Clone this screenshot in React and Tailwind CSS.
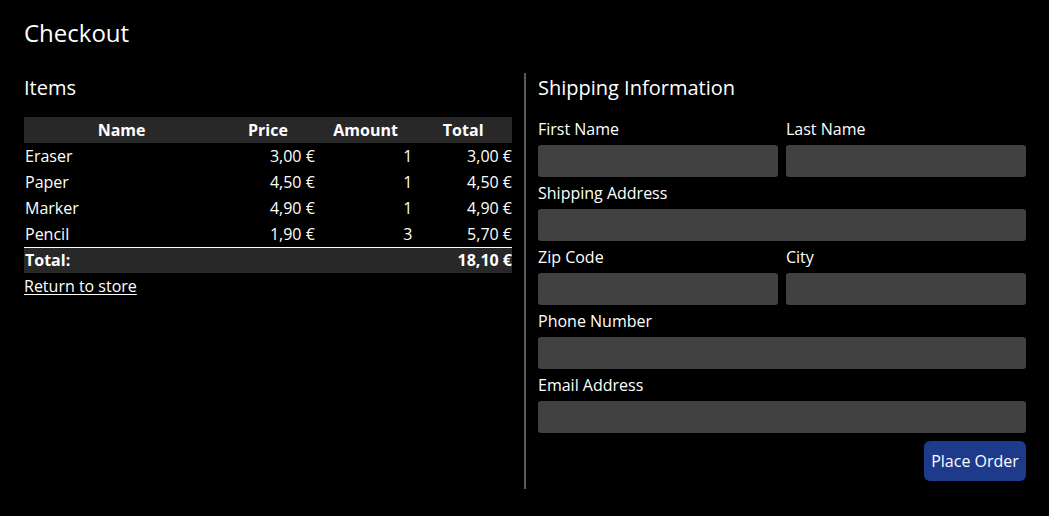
import React from "react";

const items = [
  ["Eraser", "3,00 €", "1", "3,00 €"],
  ["Paper", "4,50 €", "1", "4,50 €"],
  ["Marker", "4,90 €", "1", "4,90 €"],
  ["Pencil", "1,90 €", "3", "5,70 €"],
];

function Field({ label }) {
  return (
    <div className="flex flex-col gap-1">
      <label className="h-6 leading-6 text-base">{label}</label>
      <div className="h-8 rounded-[3px] bg-[#414141]" />
    </div>
  );
}

export default function App() {
  return (
    <div
      className="min-h-[516px] bg-black text-white pl-6 pr-[23px] pt-4"
      style={{ fontFamily: '"Open Sans", "Noto Sans", sans-serif' }}
    >
      <h1 className="text-2xl leading-[34px] mb-[23px]">Checkout</h1>
      <div className="flex">
        <div className="w-[488px] shrink-0">
          <h2 className="text-xl leading-[28px] mt-[1px] mb-[15px]">Items</h2>
          <table className="w-full table-fixed border-collapse text-base">
            <thead>
              <tr className="bg-[#282828]">
                <th className="w-[40%] h-[26px] p-0 font-bold text-center">Name</th>
                <th className="w-[20%] p-0 font-bold text-center">Price</th>
                <th className="w-[20%] p-0 font-bold text-center">Amount</th>
                <th className="w-[20%] p-0 font-bold text-center">Total</th>
              </tr>
            </thead>
            <tbody>
              {items.map((r, i) => (
                <tr key={i} className={i === items.length - 1 ? "border-b border-white" : ""}>
                  <td className="h-[26px] p-0 pl-[1px] text-left">{r[0]}</td>
                  <td className="p-0 pr-[2px] text-right">{r[1]}</td>
                  <td className="p-0 pr-[2px] text-right">{r[2]}</td>
                  <td className="p-0 text-right">{r[3]}</td>
                </tr>
              ))}
              <tr className="bg-[#282828] font-bold">
                <td className="h-[26px] p-0 pl-[1px] text-left">Total:</td>
                <td className="p-0" />
                <td className="p-0" />
                <td className="p-0 text-right">18,10 €</td>
              </tr>
            </tbody>
          </table>
          <a href="#" className="mt-[1px] inline-block leading-6 underline underline-offset-2">
            Return to store
          </a>
        </div>
        <div className="ml-3 mr-3 w-[2px] h-[416px] bg-[#5a5a5a] shrink-0" />
        <div className="w-[488px] shrink-0">
          <h2 className="text-xl leading-[28px] mt-[1px] mb-[15px]">Shipping Information</h2>
          <div className="flex flex-col gap-1">
            <div className="grid grid-cols-2 gap-2">
              <Field label="First Name" />
              <Field label="Last Name" />
            </div>
            <Field label="Shipping Address" />
            <div className="grid grid-cols-2 gap-2">
              <Field label="Zip Code" />
              <Field label="City" />
            </div>
            <Field label="Phone Number" />
            <Field label="Email Address" />
          </div>
          <div className="flex justify-end mt-2">
            <button className="h-10 w-[102px] rounded-md bg-[#1e3a8a] text-base text-white">
              Place Order
            </button>
          </div>
        </div>
      </div>
    </div>
  );
}
